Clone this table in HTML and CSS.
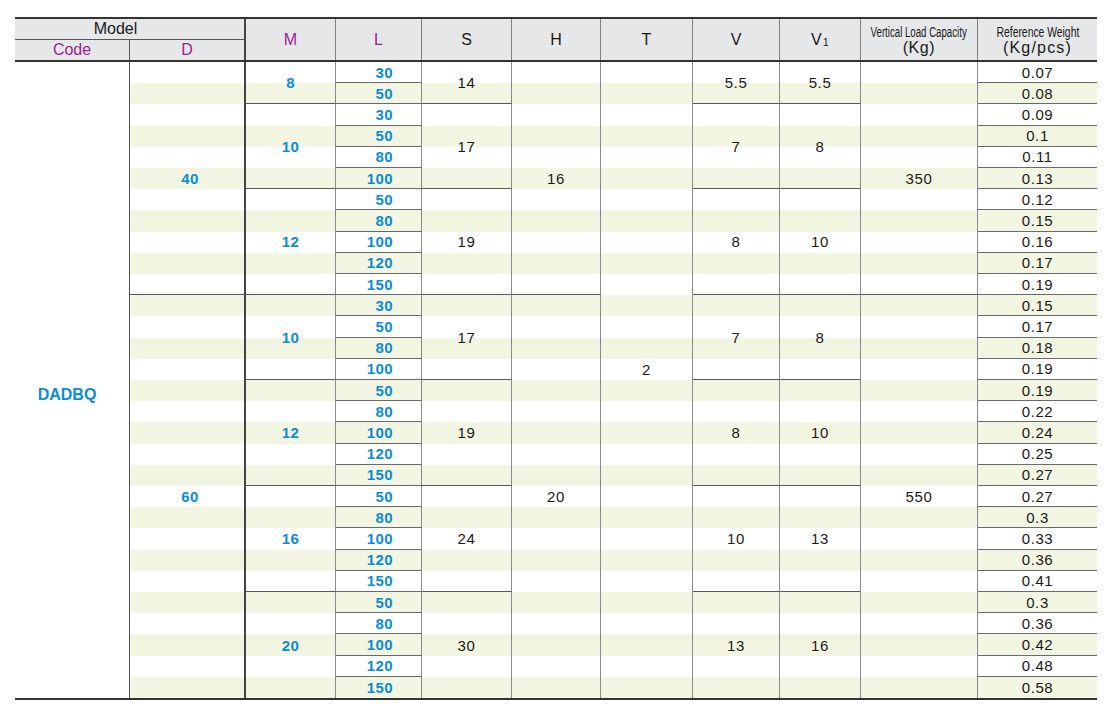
FILE: index.html
```html
<!DOCTYPE html>
<html lang="en">
<head>
<meta charset="utf-8">
<title>DADBQ specification table</title>
<link rel="stylesheet" href="styles.css">
</head>
<body>
<div class="sheet">
  <div class="head cols">
    <div class="h model">Model</div>
    <div class="h tall m mag">M</div>
    <div class="h tall l mag">L</div>
    <div class="h tall s">S</div>
    <div class="h tall hh">H</div>
    <div class="h tall t">T</div>
    <div class="h tall v">V</div>
    <div class="h tall v1">V<span class="sub">1</span></div>
    <div class="h tall vlc stack"><span class="narrow vl">Vertical Load Capacity</span><span class="unit">(Kg)</span></div>
    <div class="h tall rw stack"><span class="narrow rf">Reference Weight</span><span class="unit wide">(Kg/pcs)</span></div>
    <div class="h code mag">Code</div>
    <div class="h d mag">D</div>
  </div>
  <div class="body cols">
    <!-- row 1 -->
    <div class="c code s30 end"><span class="bl big">DADBQ</span></div>
    <div class="c d s11 bl">40</div>
    <div class="c m s2 bl">8</div>
    <div class="c l bl">30</div>
    <div class="c s s2">14</div>
    <div class="c hh s11">16</div>
    <div class="c t s30 end">2</div>
    <div class="c v s2">5.5</div>
    <div class="c v1 s2">5.5</div>
    <div class="c vlc s11">350</div>
    <div class="c rw">0.07</div>
    <!-- row 2 -->
    <div class="c l bl">50</div><div class="c rw">0.08</div>
    <!-- row 3 -->
    <div class="c m s4 bl">10</div>
    <div class="c l bl">30</div>
    <div class="c s s4">17</div>
    <div class="c v s4">7</div>
    <div class="c v1 s4">8</div>
    <div class="c rw">0.09</div>
    <div class="c l bl">50</div><div class="c rw">0.1</div>
    <div class="c l bl">80</div><div class="c rw">0.11</div>
    <div class="c l bl">100</div><div class="c rw">0.13</div>
    <!-- row 7 -->
    <div class="c m s5 bl">12</div>
    <div class="c l bl">50</div>
    <div class="c s s5">19</div>
    <div class="c v s5">8</div>
    <div class="c v1 s5">10</div>
    <div class="c rw">0.12</div>
    <div class="c l bl">80</div><div class="c rw">0.15</div>
    <div class="c l bl">100</div><div class="c rw">0.16</div>
    <div class="c l bl">120</div><div class="c rw">0.17</div>
    <div class="c l bl">150</div><div class="c rw">0.19</div>
    <!-- row 12 -->
    <div class="c d s19 bl end">60</div>
    <div class="c m s4 bl">10</div>
    <div class="c l bl">30</div>
    <div class="c s s4">17</div>
    <div class="c hh s19 end">20</div>
    <div class="c v s4">7</div>
    <div class="c v1 s4">8</div>
    <div class="c vlc s19 end">550</div>
    <div class="c rw">0.15</div>
    <div class="c l bl">50</div><div class="c rw">0.17</div>
    <div class="c l bl">80</div><div class="c rw">0.18</div>
    <div class="c l bl">100</div><div class="c rw">0.19</div>
    <!-- row 16 -->
    <div class="c m s5 bl">12</div>
    <div class="c l bl">50</div>
    <div class="c s s5">19</div>
    <div class="c v s5">8</div>
    <div class="c v1 s5">10</div>
    <div class="c rw">0.19</div>
    <div class="c l bl">80</div><div class="c rw">0.22</div>
    <div class="c l bl">100</div><div class="c rw">0.24</div>
    <div class="c l bl">120</div><div class="c rw">0.25</div>
    <div class="c l bl">150</div><div class="c rw">0.27</div>
    <!-- row 21 -->
    <div class="c m s5 bl">16</div>
    <div class="c l bl">50</div>
    <div class="c s s5">24</div>
    <div class="c v s5">10</div>
    <div class="c v1 s5">13</div>
    <div class="c rw">0.27</div>
    <div class="c l bl">80</div><div class="c rw">0.3</div>
    <div class="c l bl">100</div><div class="c rw">0.33</div>
    <div class="c l bl">120</div><div class="c rw">0.36</div>
    <div class="c l bl">150</div><div class="c rw">0.41</div>
    <!-- row 26 -->
    <div class="c m s5 bl end">20</div>
    <div class="c l bl">50</div>
    <div class="c s s5 end">30</div>
    <div class="c v s5 end">13</div>
    <div class="c v1 s5 end">16</div>
    <div class="c rw">0.3</div>
    <div class="c l bl">80</div><div class="c rw">0.36</div>
    <div class="c l bl">100</div><div class="c rw">0.42</div>
    <div class="c l bl">120</div><div class="c rw">0.48</div>
    <div class="c l bl end">150</div><div class="c rw end">0.58</div>
  </div>
</div>
</body>
</html>
```
FILE: styles.css
```css
html, body {
  margin: 0;
  padding: 0;
  background: #ffffff;
}

.sheet {
  margin: 17px 0 0 15px;
  width: 1082px;
  font-family: "Liberation Sans", Arial, Helvetica, sans-serif;
  color: #1a1a1a;
}

.cols {
  display: grid;
  grid-template-columns: 115px 116px 90px 86px 90px 89px 92px 87px 81px 117px 119px;
}

/* ---------- header ---------- */
.head {
  grid-template-rows: 21px 20px;
  background: #e6e7e9;
  border-top: 2px solid #333;
  border-bottom: 2px solid #333;
}

.h {
  box-sizing: border-box;
  display: flex;
  align-items: center;
  justify-content: center;
  font-size: 16px;
  border-right: 1px solid #808080;
}

.tall {
  grid-row: span 2;
}

.model {
  grid-column: span 2;
  border-bottom: 1px solid #555;
  border-right: 2px solid #444;
  padding-right: 28px;
}

.h.code {
  border-right: 1px solid #555;
}

.h.d {
  border-right: 2px solid #444;
}

.h.rw {
  border-right: 0;
}

.mag {
  color: #9c1f8d;
}

.sub {
  font-size: 11px;
  margin-left: 1px;
  position: relative;
  top: 2px;
}

.stack {
  flex-direction: column;
  line-height: 16px;
  padding-top: 1px;
}

.narrow {
  display: inline-block;
  font-size: 14px;
  white-space: nowrap;
}

.narrow.vl {
  transform: scaleX(0.69);
}

.narrow.rf {
  transform: scaleX(0.74);
}

.unit {
  font-size: 16px;
  letter-spacing: 0.6px;
}

.unit.wide {
  letter-spacing: 1.2px;
}

/* ---------- body ---------- */
.body {
  height: 636px;
  grid-template-rows: repeat(30, 1fr);
  border-bottom: 2px solid #333;
  background: repeating-linear-gradient(to bottom,
    #ffffff 0, #ffffff 3.3333%,
    #f2f5e1 3.3333%, #f2f5e1 6.6667%);
}

.c {
  box-sizing: border-box;
  display: flex;
  align-items: center;
  justify-content: center;
  font-size: 15px;
  letter-spacing: 0.6px;
  border-right: 1px solid #8a8a8a;
  border-bottom: 1px solid #5a5a5a;
  min-height: 0;
}

.c.end {
  border-bottom: 0;
}

.s2 { grid-row: span 2; }
.s4 { grid-row: span 4; }
.s5 { grid-row: span 5; }
.s11 { grid-row: span 11; }
.s19 { grid-row: span 19; }
.s30 { grid-row: span 30; }

.bl {
  color: #0d8cd2;
  font-weight: bold;
  letter-spacing: 0.4px;
}

.big {
  font-size: 16px;
  letter-spacing: 0;
}

.c.code {
  background: #ffffff;
  border-right: 1px solid #555;
  padding: 30px 10px 0 0;
}

.c.d {
  border-right: 2px solid #444;
  padding-left: 6px;
}

.c.l {
  justify-content: flex-end;
  padding-right: 28px;
  border-bottom-color: #6a6a6a;
}

.c.t {
  padding-bottom: 22px;
}

.c.rw {
  border-right: 0;
  border-bottom-color: #6a6a6a;
}
```
